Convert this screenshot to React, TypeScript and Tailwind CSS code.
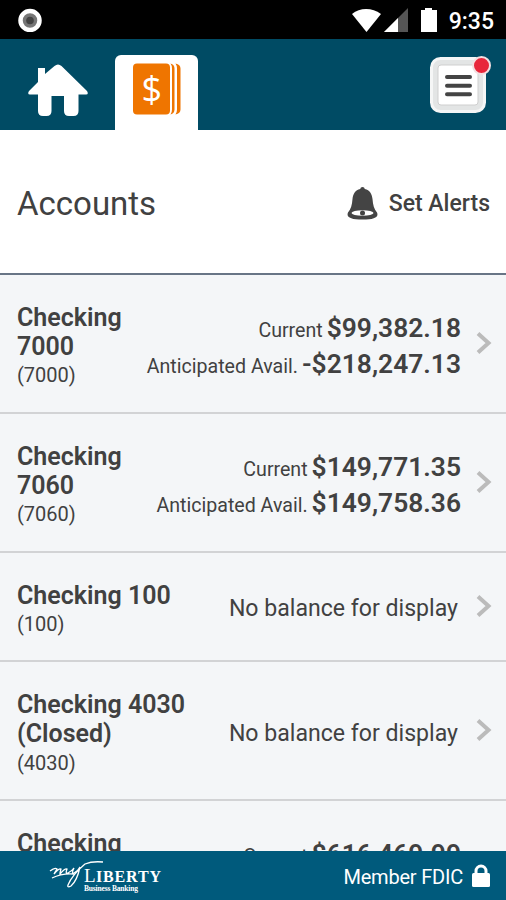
import type { ReactNode } from "react";

type Balance = { label: string; amount: string };

type Account = {
  name: string[];
  number?: string;
  balances?: Balance[];
};

const accounts: Account[] = [
  {
    name: ["Checking", "7000"],
    number: "(7000)",
    balances: [
      { label: "Current", amount: "$99,382.18" },
      { label: "Anticipated Avail.", amount: "-$218,247.13" },
    ],
  },
  {
    name: ["Checking", "7060"],
    number: "(7060)",
    balances: [
      { label: "Current", amount: "$149,771.35" },
      { label: "Anticipated Avail.", amount: "$149,758.36" },
    ],
  },
  { name: ["Checking 100"], number: "(100)" },
  { name: ["Checking 4030", "(Closed)"], number: "(4030)" },
  {
    name: ["Checking"],
    balances: [{ label: "Current", amount: "$616,469.99" }],
  },
];

function StatusBar() {
  return (
    <div className="flex h-[39px] shrink-0 items-center bg-black pl-[18px] pr-3 text-white">
      <svg className="h-6 w-6" viewBox="0 0 24 24">
        <circle cx="12" cy="12.500" r="9.500" fill="#777" stroke="#fff" strokeWidth="4.500" />
        <circle cx="12" cy="12.500" r="3.800" fill="#444" />
      </svg>
      <svg className="ml-auto h-[26px] w-[86px]" viewBox="0 0 86 26">
        <path d="M0 7C8 .3 20 .3 29 7L14.500 25Z" fill="#fff" />
        <path d="M32 25 56 1V25Z" fill="#555" />
        <path d="M32 25 46 11V25Z" fill="#fff" />
        <path d="M73 1h7v2h5v22H69V3h4z" fill="#fff" />
      </svg>
      <span className="ml-[11px] mt-[3px] text-[23px] font-medium leading-none">9:35</span>
    </div>
  );
}

function NavBar() {
  return (
    <div className="flex h-[91px] shrink-0 bg-[#004b64]">
      <svg className="ml-[28px] mt-[24px] h-[54px] w-[60px]" viewBox="0 0 60 54" fill="#fff">
        <path d="M10 5h7v6L26.500 3q3.500-3 7 0L59 28q2 3.500-1 3.500h-7.500V48q0 5-5 5H41q-5 0-5-5V33H23.500v15q0 5-5 5H15q-5 0-5-5V31.500H2q-3 0-1-3.500l9-9z" />
      </svg>
      <div className="ml-[27px] mt-[15.5px] h-[75.5px] w-[83px] rounded-t-md bg-white">
        <svg className="ml-[18px] mt-[8.5px] h-[53px] w-[48px]" viewBox="0 0 48 53">
          <rect x="0" y="0.500" width="37" height="51" rx="4" fill="#ef7500" />
          <path d="M37.500.5q4 1 4 5v41q0 4-4 5q1.500-2 1.500-5v-41q0-3-1.500-5zM42.500.5q5 1 5 5v41q0 4-5 5q1.500-2 1.500-5v-41q0-3-1.500-5z" fill="#ef7500" />
          <text x="18.800" y="38.500" textAnchor="middle" fill="#fff" fontFamily="Open Sans" fontSize="36">
            $
          </text>
        </svg>
      </div>
      <button className="relative ml-auto mr-[20px] mt-[18px] h-[56px] w-[56px]">
        <svg className="h-full w-full" viewBox="0 0 56 56">
          <rect x="1.500" y="1.500" width="53" height="53" rx="9" fill="#e3e5e5" stroke="#f5f6f6" strokeWidth="3" />
          <rect x="8" y="8" width="40" height="40" rx="3" fill="#fff" stroke="#cfcfcf" />
          <path d="M17 20h23M17 28.700h23M17 37.300h23" stroke="#444" strokeWidth="4" strokeLinecap="round" />
        </svg>
        <span className="absolute -right-[5px] -top-[1px] h-[19px] w-[19px] rounded-full border-2 border-[#f3dfe1] bg-[#e8263a]" />
      </button>
    </div>
  );
}

function BellIcon() {
  return (
    <svg className="h-[33px] w-[31px]" viewBox="0 0 31 33">
      <path
        d="M15.500 0q2 0 2.300 2c5 1 7.200 5 7.700 10 .5 6 1.500 10 4.500 13.500Q33 32.500 15.500 32.500T1 25.500C4 22 5 18 5.500 12c.5-5 2.700-9 7.700-10q.3-2 2.300-2z"
        fill="#444"
      />
      <ellipse cx="15.500" cy="26" rx="11" ry="2.800" fill="#fff" />
      <circle cx="15.500" cy="26" r="2.500" fill="#444" />
    </svg>
  );
}

function Chevron() {
  return (
    <svg className="mb-[8px] mr-[14px] h-[24px] w-[16px] shrink-0" viewBox="0 0 16 24" fill="none">
      <path d="M2 2.500 12.500 12 2 21.500" stroke="#bbb" strokeWidth="4" />
    </svg>
  );
}

function Row({ children }: { children: ReactNode }) {
  return (
    <li className="flex shrink-0 items-center border-b-2 border-[#d2d3d5] pb-[21px] pl-[17px] pt-[28px]">
      {children}
    </li>
  );
}

function AccountRow({ account }: { account: Account }) {
  return (
    <Row>
      <div className={`whitespace-nowrap leading-[29.3px] ${account.balances ? "min-h-[88px]" : ""}`}>
        {account.name.map((line) => (
          <div key={line} className="text-[25px] font-semibold">
            {line}
          </div>
        ))}
        {account.number && <div className="text-[20px]">{account.number}</div>}
      </div>
      <div className={`mb-[2px] ml-auto mr-[15px] whitespace-nowrap text-right ${account.balances ? "min-h-[72px]" : ""}`}>
        {account.balances ? (
          account.balances.map((b) => (
            <div key={b.label} className="flex h-[36px] items-baseline justify-end gap-1 leading-[36px]">
              <span className="text-[19.6px]">{b.label}</span>
              <span className="text-[26.4px] font-semibold">{b.amount}</span>
            </div>
          ))
        ) : (
          <span className="relative top-px mr-[3px] text-[23.1px]">No balance for display</span>
        )}
      </div>
      <Chevron />
    </Row>
  );
}

function Footer() {
  return (
    <div className="flex h-[49px] shrink-0 items-center bg-[#005a7c] text-white">
      <svg className="ml-[48px] h-[34px] w-[116px]" viewBox="0 0 116 34" fill="#fff">
        <path
          d="M2 12q5-4 7-2-2 3-3 5 5-6 7-5-1 3-1 5 5-6 7-5-2 5 1 4 4-2 6-5-3 6 0 5 4-2 6-6-3 14-9 19-4 2-3-1 4-10 17-21 7-3 18-2M4 19q10-5 22-4"
          fill="none"
          stroke="#fff"
          strokeWidth="1.300"
        />
        <text x="36" y="22.500" fontFamily="Liberation Serif" fontSize="19" textLength="10">
          L
        </text>
        <text x="48" y="22.500" fontFamily="Liberation Serif" fontSize="16" fontWeight="bold" textLength="65">
          IBERTY
        </text>
        <text x="36" y="32" fontFamily="Liberation Serif" fontSize="7.500" fontWeight="bold" textLength="54">
          Business Banking
        </text>
      </svg>
      <span className="ml-auto mt-[3px] text-[20px] tracking-[-0.2px]">Member FDIC</span>
      <svg className="ml-[9px] mr-[16px] h-[23px] w-[18px]" viewBox="0 0 18 23">
        <path d="M4 11V7a5 5 0 0 1 10 0v4" fill="none" stroke="#fff" strokeWidth="3" />
        <rect y="9" width="18" height="14" rx="1.500" fill="#fff" />
      </svg>
    </div>
  );
}

export default function App() {
  return (
    <div className="flex h-[900px] w-[506px] flex-col overflow-hidden bg-white font-['Roboto',sans-serif] text-[#414141]">
      <StatusBar />
      <NavBar />
      <div className="flex h-[144.5px] shrink-0 items-center border-b-2 border-[#687586] pl-[17px] pr-4 pt-[5px]">
        <h1 className="text-[33px]">Accounts</h1>
        <button className="ml-auto flex items-center gap-[11px] text-[23px] font-medium">
          <BellIcon />
          <span>Set Alerts</span>
        </button>
      </div>
      <ul className="flex min-h-0 flex-1 flex-col overflow-hidden bg-[#f4f6f8]">
        {accounts.map((a, i) => (
          <AccountRow key={i} account={a} />
        ))}
      </ul>
      <Footer />
    </div>
  );
}
